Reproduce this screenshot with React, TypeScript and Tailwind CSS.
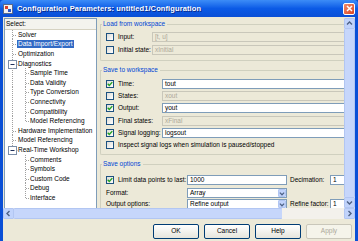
import type { ReactNode } from 'react';

type TreeRow = {
  label: string;
  level: 0 | 1;
  expander?: boolean;
  selected?: boolean;
  rootLine: 'full' | 'top' | 'none';
  childLine?: 'full' | 'top';
};

const TREE: TreeRow[] = [
  { label: 'Solver', level: 0, rootLine: 'full' },
  { label: 'Data Import/Export', level: 0, rootLine: 'full', selected: true },
  { label: 'Optimization', level: 0, rootLine: 'full' },
  { label: 'Diagnostics', level: 0, rootLine: 'full', expander: true },
  { label: 'Sample Time', level: 1, rootLine: 'full', childLine: 'full' },
  { label: 'Data Validity', level: 1, rootLine: 'full', childLine: 'full' },
  { label: 'Type Conversion', level: 1, rootLine: 'full', childLine: 'full' },
  { label: 'Connectivity', level: 1, rootLine: 'full', childLine: 'full' },
  { label: 'Compatibility', level: 1, rootLine: 'full', childLine: 'full' },
  { label: 'Model Referencing', level: 1, rootLine: 'full', childLine: 'top' },
  { label: 'Hardware Implementation', level: 0, rootLine: 'full' },
  { label: 'Model Referencing', level: 0, rootLine: 'full' },
  { label: 'Real-Time Workshop', level: 0, rootLine: 'top', expander: true },
  { label: 'Comments', level: 1, rootLine: 'none', childLine: 'full' },
  { label: 'Symbols', level: 1, rootLine: 'none', childLine: 'full' },
  { label: 'Custom Code', level: 1, rootLine: 'none', childLine: 'full' },
  { label: 'Debug', level: 1, rootLine: 'none', childLine: 'full' },
  { label: 'Interface', level: 1, rootLine: 'none', childLine: 'top' },
];

function Connector({ row }: { row: TreeRow }) {
  const w = row.level === 0 ? 13 : 25;
  const dot = { stroke: '#a0a0a0', strokeWidth: 1, strokeDasharray: '1 1' };
  return (
    <svg width={w} height="10" viewBox={`0 0 ${w} 10`} className="shrink-0 overflow-visible">
      {row.rootLine === 'full' && <line x1="7.5" y1="0" x2="7.5" y2="10" {...dot} />}
      {row.rootLine === 'top' && <line x1="7.5" y1="0" x2="7.5" y2="5" {...dot} />}
      {row.level === 0 && !row.expander && <line x1="8" y1="5.5" x2="12" y2="5.5" {...dot} />}
      {row.expander && (
        <g>
          <rect x="3.5" y="1.5" width="8" height="8" fill="white" stroke="#7b8ea8" />
          <line x1="5.5" y1="5.5" x2="9.5" y2="5.5" stroke="#1f2f5a" />
          <line x1="11.5" y1="5.5" x2="13" y2="5.5" {...dot} />
        </g>
      )}
      {row.childLine === 'full' && <line x1="20.5" y1="0" x2="20.5" y2="10" {...dot} />}
      {row.childLine === 'top' && <line x1="20.5" y1="0" x2="20.5" y2="5" {...dot} />}
      {row.level === 1 && <line x1="21" y1="5.5" x2="25" y2="5.5" {...dot} />}
    </svg>
  );
}

function Check({ on }: { on?: boolean }) {
  return (
    <span className="w-[8px] h-[8px] shrink-0 border border-[#1c5180] bg-linear-to-br from-[#dcdcd7] to-white flex items-center justify-center">
      {on && (
        <svg width="6" height="6" viewBox="0 0 6 6">
          <path d="M0.7 2.8 L2.3 4.5 L5.3 1.1" fill="none" stroke="#21a121" strokeWidth="1.4" />
        </svg>
      )}
    </span>
  );
}

function Field({ value, disabled, className }: { value: string; disabled?: boolean; className?: string }) {
  return (
    <div
      className={`h-[10px] border flex items-center px-[2px] overflow-hidden whitespace-nowrap ${
        disabled ? 'border-[#c9c7ba] bg-[#ece9d8] text-[#aca899]' : 'border-[#7f9db9] bg-white text-black'
      } ${className ?? ''}`}
    >
      {value}
    </div>
  );
}

function Chevron({ dir }: { dir: 'up' | 'down' | 'left' | 'right' }) {
  const d = {
    up: 'M1 4.5 L3.5 2 L6 4.5',
    down: 'M1 2.5 L3.5 5 L6 2.5',
    left: 'M4.5 1 L2 3.5 L4.5 6',
    right: 'M2.5 1 L5 3.5 L2.5 6',
  }[dir];
  return (
    <svg width="7" height="7" viewBox="0 0 7 7">
      <path d={d} fill="none" stroke="#4d6185" strokeWidth="1.4" />
    </svg>
  );
}

function Dropdown({ value, className }: { value: string; className?: string }) {
  return (
    <div className={`h-[10px] border border-[#7f9db9] bg-white flex items-center ${className ?? ''}`}>
      <span className="flex-1 pl-[2px] whitespace-nowrap">{value}</span>
      <span className="w-[8px] h-[8px] mr-[0.5px] bg-[#c1d3fb] border border-[#b2c6f2] rounded-[1px] flex items-center justify-center">
        <Chevron dir="down" />
      </span>
    </div>
  );
}

function CheckRow({ on, label, labelW, className, children }: { on?: boolean; label: string; labelW: string; className?: string; children?: ReactNode }) {
  return (
    <div className={`h-[10px] flex items-center ${className ?? ''}`}>
      <Check on={on} />
      <span className={`ml-[4px] shrink-0 whitespace-nowrap ${labelW}`}>{label}</span>
      {children}
    </div>
  );
}

function Group({ title, className, children }: { title: string; className?: string; children: ReactNode }) {
  return (
    <div className={className}>
      <div className="h-[8px] flex items-center">
        <span className="w-[2px] h-px bg-[#d0d0bf]" />
        <span className="pl-px pr-[2px] text-[#0046d5] whitespace-nowrap">{title}</span>
        <span className="flex-1 h-px bg-[#d0d0bf]" />
      </div>
      <div className="-mt-[4px] pt-[4px] pl-[5px] border-l border-b border-[#d0d0bf] rounded-bl-[2px]">{children}</div>
    </div>
  );
}

function Button({ label, disabled }: { label: string; disabled?: boolean }) {
  return (
    <div
      className={`w-[46px] h-[15px] rounded-[2px] border flex items-center justify-center ${
        disabled
          ? 'border-[#c9c7ba] bg-[#f5f4ea] text-[#aca899]'
          : 'border-[#003c74] bg-linear-to-b from-white to-[#e6e5dc] text-black'
      }`}
    >
      {label}
    </div>
  );
}

function TitleBar() {
  return (
    <div className="h-[17px] shrink-0 flex items-center bg-linear-to-b from-[#3c8cf7] via-[#0b5ae6] to-[#0a4fd6] rounded-t-[4px]">
      <svg width="10" height="10" viewBox="0 0 10 10" className="ml-[3px] shrink-0">
        <rect x="0.5" y="0.5" width="9" height="9" fill="#f2f2f2" stroke="#5a6a8a" />
        <rect x="2" y="2" width="3" height="3" fill="#d8402a" />
        <rect x="5" y="5" width="3" height="3" fill="#2a55c8" />
      </svg>
      <span className="ml-[4px] text-white font-bold text-[7.5px] tracking-[0.1px] whitespace-nowrap [text-shadow:1px_1px_0_#0a2a8a]">
        Configuration Parameters: untitled1/Configuration
      </span>
      <span className="flex-1" />
      <span className="w-[12px] h-[12px] mr-[3px] rounded-[2px] border border-white bg-linear-to-br from-[#f08a6a] to-[#d9421f] flex items-center justify-center">
        <svg width="7" height="7" viewBox="0 0 7 7">
          <path d="M1 1 L6 6 M6 1 L1 6" stroke="white" strokeWidth="1.5" />
        </svg>
      </span>
    </div>
  );
}

export default function App() {
  return (
    <div className="w-[358px] h-[241px] overflow-hidden flex flex-col bg-[#0a4fd6] font-['Liberation_Sans',Arial,sans-serif] text-[6.5px] leading-none text-black">
      <TitleBar />
      <div className="flex flex-1 min-h-0">
        <div className="w-[3px] shrink-0 bg-[#0a4fd6]" />
        <div className="w-[352px] flex flex-col bg-[#ece9d8]">
          <div className="h-[1px] shrink-0" />
          {/* panes */}
          <div className="h-[190px] shrink-0 flex">
            {/* tree */}
            <div className="ml-px w-[93px] shrink-0 border border-[#7f9db9] border-b-0 bg-white overflow-hidden">
              <div className="h-[11px] flex items-center pl-px bg-[#f4f3ee] border-b border-[#d6d2c2]">Select:</div>
              {TREE.map((row, i) => (
                <div key={i} className="h-[9.6px] flex items-center">
                  <Connector row={row} />
                  <span
                    className={`whitespace-nowrap px-px leading-[8px] -ml-px ${
                      row.selected ? 'bg-[#316ac5] text-white' : ''
                    }`}
                  >
                    {row.label}
                  </span>
                </div>
              ))}
            </div>
            {/* settings */}
            <div className="w-[247px] shrink-0 overflow-hidden">
              <div className="w-[320px] pl-[3px]">
                <Group title="Load from workspace" className="mt-[2px]">
                  <CheckRow label="Input:" labelW="w-[34px]" className="mt-[4px]">
                    <Field value="[t, u]" disabled className="flex-1" />
                  </CheckRow>
                  <CheckRow label="Initial state:" labelW="w-[34px]" className="mt-[3px] mb-[5px]">
                    <Field value="xInitial" disabled className="flex-1" />
                  </CheckRow>
                </Group>
                <Group title="Save to workspace" className="mt-[5px]">
                  <CheckRow on label="Time:" labelW="w-[44px]" className="mt-[5px]">
                    <Field value="tout" className="flex-1" />
                  </CheckRow>
                  <CheckRow label="States:" labelW="w-[44px]" className="mt-[2px]">
                    <Field value="xout" disabled className="flex-1" />
                  </CheckRow>
                  <CheckRow on label="Output:" labelW="w-[44px]" className="mt-[2px]">
                    <Field value="yout" className="flex-1" />
                  </CheckRow>
                  <CheckRow label="Final states:" labelW="w-[44px]" className="mt-[3px]">
                    <Field value="xFinal" disabled className="flex-1" />
                  </CheckRow>
                  <CheckRow on label="Signal logging:" labelW="w-[44px]" className="mt-[2px]">
                    <Field value="logsout" className="flex-1" />
                  </CheckRow>
                  <CheckRow
                    label="Inspect signal logs when simulation is paused/stopped"
                    labelW=""
                    className="mt-[2px] mb-[4px]"
                  />
                </Group>
                <Group title="Save options" className="mt-[5px]">
                  <CheckRow on label="Limit data points to last:" labelW="w-[69px]" className="mt-[7px]">
                    <Field value="1000" className="w-[100px] shrink-0" />
                    <span className="ml-[3px] w-[40px] shrink-0">Decimation:</span>
                    <Field value="1" className="w-[30px] shrink-0" />
                  </CheckRow>
                  <div className="mt-[3px] h-[10px] flex items-center">
                    <span className="w-[81px] shrink-0">Format:</span>
                    <Dropdown value="Array" className="w-[100px] shrink-0" />
                  </div>
                  <div className="mt-[1px] h-[10px] flex items-center">
                    <span className="w-[81px] shrink-0">Output options:</span>
                    <Dropdown value="Refine output" className="w-[100px] shrink-0" />
                    <span className="ml-[3px] w-[40px] shrink-0">Refine factor:</span>
                    <Field value="1" className="w-[30px] shrink-0" />
                  </div>
                </Group>
              </div>
            </div>
            {/* vertical scrollbar */}
            <div className="w-[11px] shrink-0 flex flex-col bg-[#f3f1ec]">
              <div className="h-[11px] shrink-0 bg-[#c1d3fb] border border-[#b2c6f2] rounded-[1px] flex items-center justify-center">
                <Chevron dir="up" />
              </div>
              <div className="flex-1 bg-[#c6d6fb] border-x border-[#b2c6f2] rounded-[1px]" />
              <div className="h-[11px] shrink-0 bg-[#c1d3fb] border border-[#b2c6f2] rounded-[1px] flex items-center justify-center">
                <Chevron dir="down" />
              </div>
            </div>
          </div>
          {/* horizontal scrollbar */}
          <div className="h-[11px] shrink-0 flex bg-[#f3f1ec]">
            <div className="w-[11px] shrink-0 bg-[#c1d3fb] border border-[#b2c6f2] rounded-[1px] flex items-center justify-center">
              <Chevron dir="left" />
            </div>
            <div className="w-[268px] shrink-0 bg-[#c6d6fb] border-y border-[#b2c6f2] rounded-[1px]" />
            <div className="flex-1" />
            <div className="w-[11px] shrink-0 bg-[#c1d3fb] border border-[#b2c6f2] rounded-[1px] flex items-center justify-center">
              <Chevron dir="right" />
            </div>
          </div>
          {/* buttons */}
          <div className="flex-1 flex justify-end gap-[5px] pt-[5px] pr-[3px]">
            <Button label="OK" />
            <Button label="Cancel" />
            <Button label="Help" />
            <Button label="Apply" disabled />
          </div>
        </div>
        <div className="w-[3px] shrink-0 bg-[#0a4fd6]" />
      </div>
    </div>
  );
}
